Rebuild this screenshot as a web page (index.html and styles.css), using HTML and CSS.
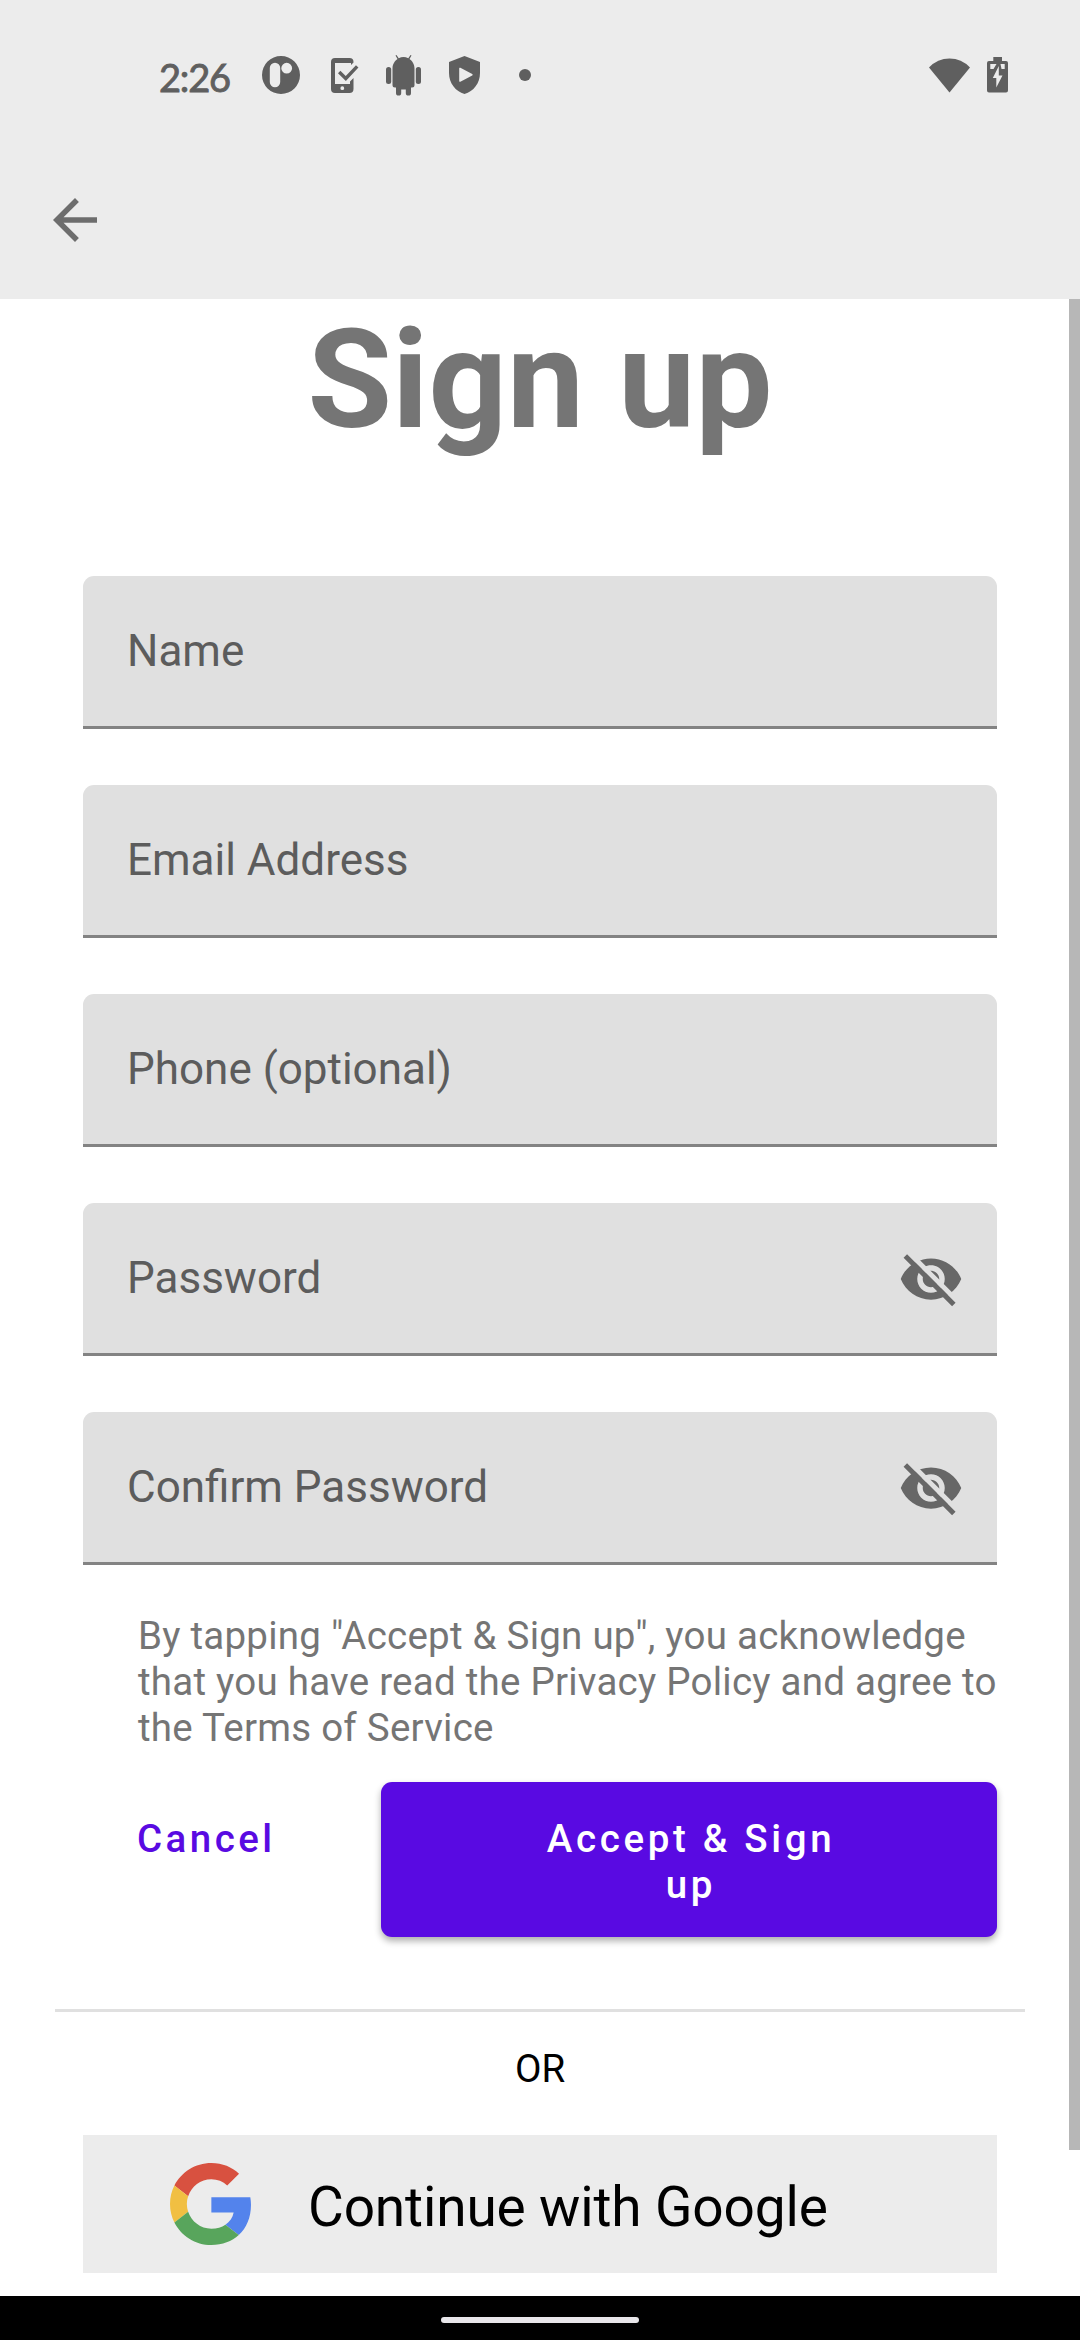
FILE: index.html
```html
<!DOCTYPE html>
<html lang="en">
<head>
<meta charset="utf-8">
<title>Sign up</title>
<link rel="stylesheet" href="styles.css">
</head>
<body>
<header class="top">
  <div class="status">
    <span class="time">2:26</span>
    <svg class="s-icon s-app" viewBox="0 0 38 38"><path fill-rule="evenodd" d="M19 0a19 19 0 1 0 0 38a19 19 0 1 0 0-38zM13 6.8a5.2 5.2 0 0 1 5.2 5.2v14a5.2 5.2 0 0 1-10.4 0v-14a5.2 5.2 0 0 1 5.2-5.2zM24.7 6.8a5.4 5.4 0 1 1 0 10.8a5.4 5.4 0 1 1 0-10.8z"/></svg>
    <svg class="s-icon s-phone" viewBox="0 0 28 35"><path fill-rule="evenodd" d="M4 0H18.500a4 4 0 0 1 4 4V4.500L20 7V5H4V26H19V23.500L22.500 20V31a4 4 0 0 1-4 4H4a4 4 0 0 1-4-4V4a4 4 0 0 1 4-4zM11.300 28.300a1.900 1.900 0 1 0 0 3.800a1.900 1.900 0 1 0 0-3.800z"/><path class="tick" d="M8.200 14l6.600 6.500L26.200 8.300"/></svg>
    <svg class="s-icon s-android" viewBox="0 0 35 41"><path d="M6.500 13.500C6.500 9 9 5.500 11.500 4L9.500.6L10.500 0L12.700 3.200Q17.500 1 22.300 3.200L24.500 0L25.500.6L23.500 4C26 5.500 28.500 9 28.500 13.500V30a2.500 2.500 0 0 1-2.500 2.500H25V38a2.600 2.600 0 0 1-5.200 0V34.500H15.200V38a2.600 2.600 0 0 1-5.200 0V32.500H9A2.500 2.500 0 0 1 6.500 30z"/><rect x="0" y="12" width="5.200" height="17" rx="2.500"/><rect x="29.800" y="12" width="5.200" height="17" rx="2.500"/></svg>
    <svg class="s-icon s-shield" viewBox="0 0 31 38"><path fill-rule="evenodd" d="M15.500 0L31 6V17C31 27 24.500 35.500 15.500 38C6.500 35.500 0 27 0 17V6zM10.200 12.500V25a.8.8 0 0 0 1.200.7L23.200 19.500a.8.8 0 0 0 0-1.400L11.400 11.800a.8.8 0 0 0-1.200.7z"/></svg>
    <span class="s-dot"></span>
    <svg class="s-icon s-wifi" viewBox="0 0 41 35"><path d="M0 9.500Q8.500.5 20.500.5T41 9.500L20.500 34.500z"/></svg>
    <svg class="s-icon s-battery" viewBox="0 0 21 36"><path d="M6.300 0h8.700v4h4a2 2 0 0 1 2 2v27.500a2 2 0 0 1-2 2H2a2 2 0 0 1-2-2V6a2 2 0 0 1 2-2h4.300z"/><path class="hole" d="M3.300 7h6.200L6.500 12H3.300zM13.500 7h4.200v5h-3.200zM11.800 9v9.500H15.500L9.300 30.500V21H5.800z"/></svg>
  </div>
  <svg class="back" viewBox="0 0 24 24"><path d="M20 11H7.830l5.590-5.590L12 4l-8 8 8 8 1.410-1.410L7.830 13H20v-2z"/></svg>
</header>

<main class="page">
  <h1 class="title">Sign up</h1>
  <form class="fields">
    <div class="field"><span>Name</span></div>
    <div class="field"><span>Email Address</span></div>
    <div class="field"><span>Phone (optional)</span></div>
    <div class="field"><span>Password</span>
      <svg class="eye" viewBox="0 0 24 24"><path d="M12 4.500C7 4.500 2.730 7.610 1 12c1.730 4.390 6 7.500 11 7.500s9.270-3.110 11-7.500c-1.730-4.390-6-7.500-11-7.500zM12 17c-2.760 0-5-2.240-5-5s2.240-5 5-5 5 2.240 5 5-2.240 5-5 5zM12 9c-1.660 0-3 1.340-3 3s1.340 3 3 3 3-1.340 3-3-1.340-3-3-3z"/><path class="gap" d="M4 2.460L22 20.460"/><path class="slash" d="M2.650 3.600L20.300 21.250"/></svg>
    </div>
    <div class="field"><span>Confirm Password</span>
      <svg class="eye" viewBox="0 0 24 24"><path d="M12 4.500C7 4.500 2.730 7.610 1 12c1.730 4.390 6 7.500 11 7.500s9.270-3.110 11-7.500c-1.730-4.390-6-7.500-11-7.500zM12 17c-2.760 0-5-2.240-5-5s2.240-5 5-5 5 2.240 5 5-2.240 5-5 5zM12 9c-1.660 0-3 1.340-3 3s1.340 3 3 3 3-1.340 3-3-1.340-3-3-3z"/><path class="gap" d="M4 2.460L22 20.460"/><path class="slash" d="M2.650 3.600L20.300 21.250"/></svg>
    </div>
  </form>
  <p class="terms">By tapping "Accept &amp; Sign up", you acknowledge<br>that you have read the Privacy Policy and agree to<br>the Terms of Service</p>
  <div class="actions">
    <button class="cancel">Cancel</button>
    <button class="accept">Accept &amp; Sign<br>up</button>
  </div>
  <hr class="divider">
  <p class="or">OR</p>
  <button class="google">
    <svg class="g-logo" viewBox="0 0 47 48" preserveAspectRatio="none"><path fill="#d85140" d="M24 9.500c3.540 0 6.710 1.220 9.210 3.600l6.850-6.850C35.900 2.380 30.470 0 24 0 14.620 0 6.510 5.380 2.560 13.220l7.980 6.190C12.430 13.720 17.740 9.500 24 9.500z"/><path fill="#5383ec" d="M46.980 24.550c0-1.570-.15-3.090-.38-4.550H24v9.020h12.940c-.58 2.960-2.260 5.480-4.780 7.180l7.730 6c4.510-4.180 7.090-10.360 7.090-17.650z"/><path fill="#f1bf42" d="M10.530 28.590c-.48-1.450-.76-2.990-.76-4.590s.27-3.140.76-4.590l-7.980-6.190C.92 16.460 0 20.120 0 24c0 3.880.92 7.540 2.560 10.780l7.970-6.190z"/><path fill="#58a55c" d="M24 48c6.480 0 11.930-2.130 15.890-5.810l-7.730-6c-2.150 1.450-4.920 2.300-8.160 2.300-6.260 0-11.570-4.220-13.470-9.910l-7.980 6.190C6.510 42.620 14.620 48 24 48z"/></svg>
    <span>Continue with Google</span>
  </button>
  <div class="scrollbar"></div>
</main>

<footer class="nav"><div class="handle"></div></footer>
</body>
</html>
```
FILE: styles.css
```css
* { box-sizing: border-box; }

body {
  margin: 0;
  width: 1080px;
  height: 2340px;
  display: flex;
  flex-direction: column;
  overflow: hidden;
  background: #fff;
  font-family: Roboto, "Noto Sans", sans-serif;
}

button {
  border: 0;
  margin: 0;
  padding: 0;
  background: none;
  font-family: inherit;
}

/* Status bar and toolbar */
.top {
  height: 299px;
  flex: none;
  background: #ececec;
}

.status {
  height: 150px;
  padding: 0 72px 0 159px;
  display: flex;
  align-items: center;
}

.time {
  width: 103px;
  padding-top: 3px;
  font: 400 38px/46px Lato, sans-serif;
  letter-spacing: -1.2px;
  color: #5f5f5f;
  -webkit-text-stroke: 0.9px #5f5f5f;
}

.s-icon { flex: none; fill: #5f5f5f; }
.s-app { width: 38px; height: 38px; }
.s-phone { width: 28px; height: 35px; margin-left: 31px; }
.s-android { width: 35px; height: 41px; margin-left: 27px; }
.s-shield { width: 31px; height: 38px; margin-left: 28px; }
.s-dot { width: 12px; height: 12px; margin-left: 39px; border-radius: 50%; background: #5f5f5f; }
.s-wifi { width: 41px; height: 35px; margin-left: auto; }
.s-battery { width: 21px; height: 36px; margin-left: 17px; }
.tick { fill: none; stroke: #5f5f5f; stroke-width: 3.4; }
.hole { fill: #ececec; }

.back {
  display: block;
  width: 66px;
  height: 66px;
  margin: 37px 0 0 42px;
  fill: #6d6d6d;
}

/* Form page */
.page {
  position: relative;
  height: 1997px;
  flex: none;
  padding: 0 83px;
  display: flex;
  flex-direction: column;
}

.title {
  margin: 0 0 115px;
  text-align: center;
  font-size: 137.5px;
  line-height: 162px;
  font-weight: 700;
  color: #757575;
}

.fields { display: flex; flex-direction: column; gap: 56px; }

.field {
  height: 153px;
  padding: 0 33px 0 44px;
  display: flex;
  align-items: center;
  justify-content: space-between;
  border-bottom: 3px solid #838383;
  border-radius: 11px 11px 0 0;
  background: #e0e0e0;
  font-size: 44px;
  color: #5c5c5c;
}

.eye { width: 66px; height: 66px; margin-top: 2px; fill: #676767; }
.gap { stroke: #e0e0e0; stroke-width: 1.8; }
.slash { stroke: #676767; stroke-width: 1.8; }

.terms {
  margin: 48px 0 31px;
  padding-left: 55px;
  font-size: 38.5px;
  line-height: 46px;
  letter-spacing: 0.24px;
  white-space: nowrap;
  color: #757575;
}

.actions { display: flex; justify-content: space-between; align-items: flex-start; }

.cancel, .accept {
  padding: 34px 0 29px;
  font-size: 38.5px;
  line-height: 46px;
  font-weight: 500;
  letter-spacing: 3.44px;
}

.cancel { padding-left: 54px; color: #590ae2; }

.accept {
  width: 616px;
  padding-left: 4px;
  border-radius: 11px;
  background: #590ae2;
  color: #fff;
  letter-spacing: 3.65px;
  box-shadow: 0 4px 7px rgba(0, 0, 0, 0.32);
}

.divider {
  width: 970px;
  height: 3px;
  margin: 72px -28px 34px;
  border: 0;
  background: #e0e0e0;
}

.or {
  margin: 0 0 43px;
  text-align: center;
  font-size: 38.5px;
  line-height: 46px;
  color: #000;
}

.google {
  height: 138px;
  padding-left: 87px;
  display: flex;
  align-items: center;
  gap: 57px;
  background: #ececec;
  font-size: 55px;
  letter-spacing: -0.15px;
  color: #000;
}

.google span { padding-top: 5px; }
.g-logo { width: 81px; height: 82px; }

.scrollbar {
  position: absolute;
  top: 0;
  right: 0;
  width: 11px;
  height: 1851px;
  background: #b7b7b7;
}

/* Gesture navigation */
.nav {
  height: 44px;
  flex: none;
  display: flex;
  align-items: center;
  justify-content: center;
  background: #000;
}

.handle { width: 198px; height: 6px; margin-top: 4px; border-radius: 3px; background: #e8e6ea; }
```
